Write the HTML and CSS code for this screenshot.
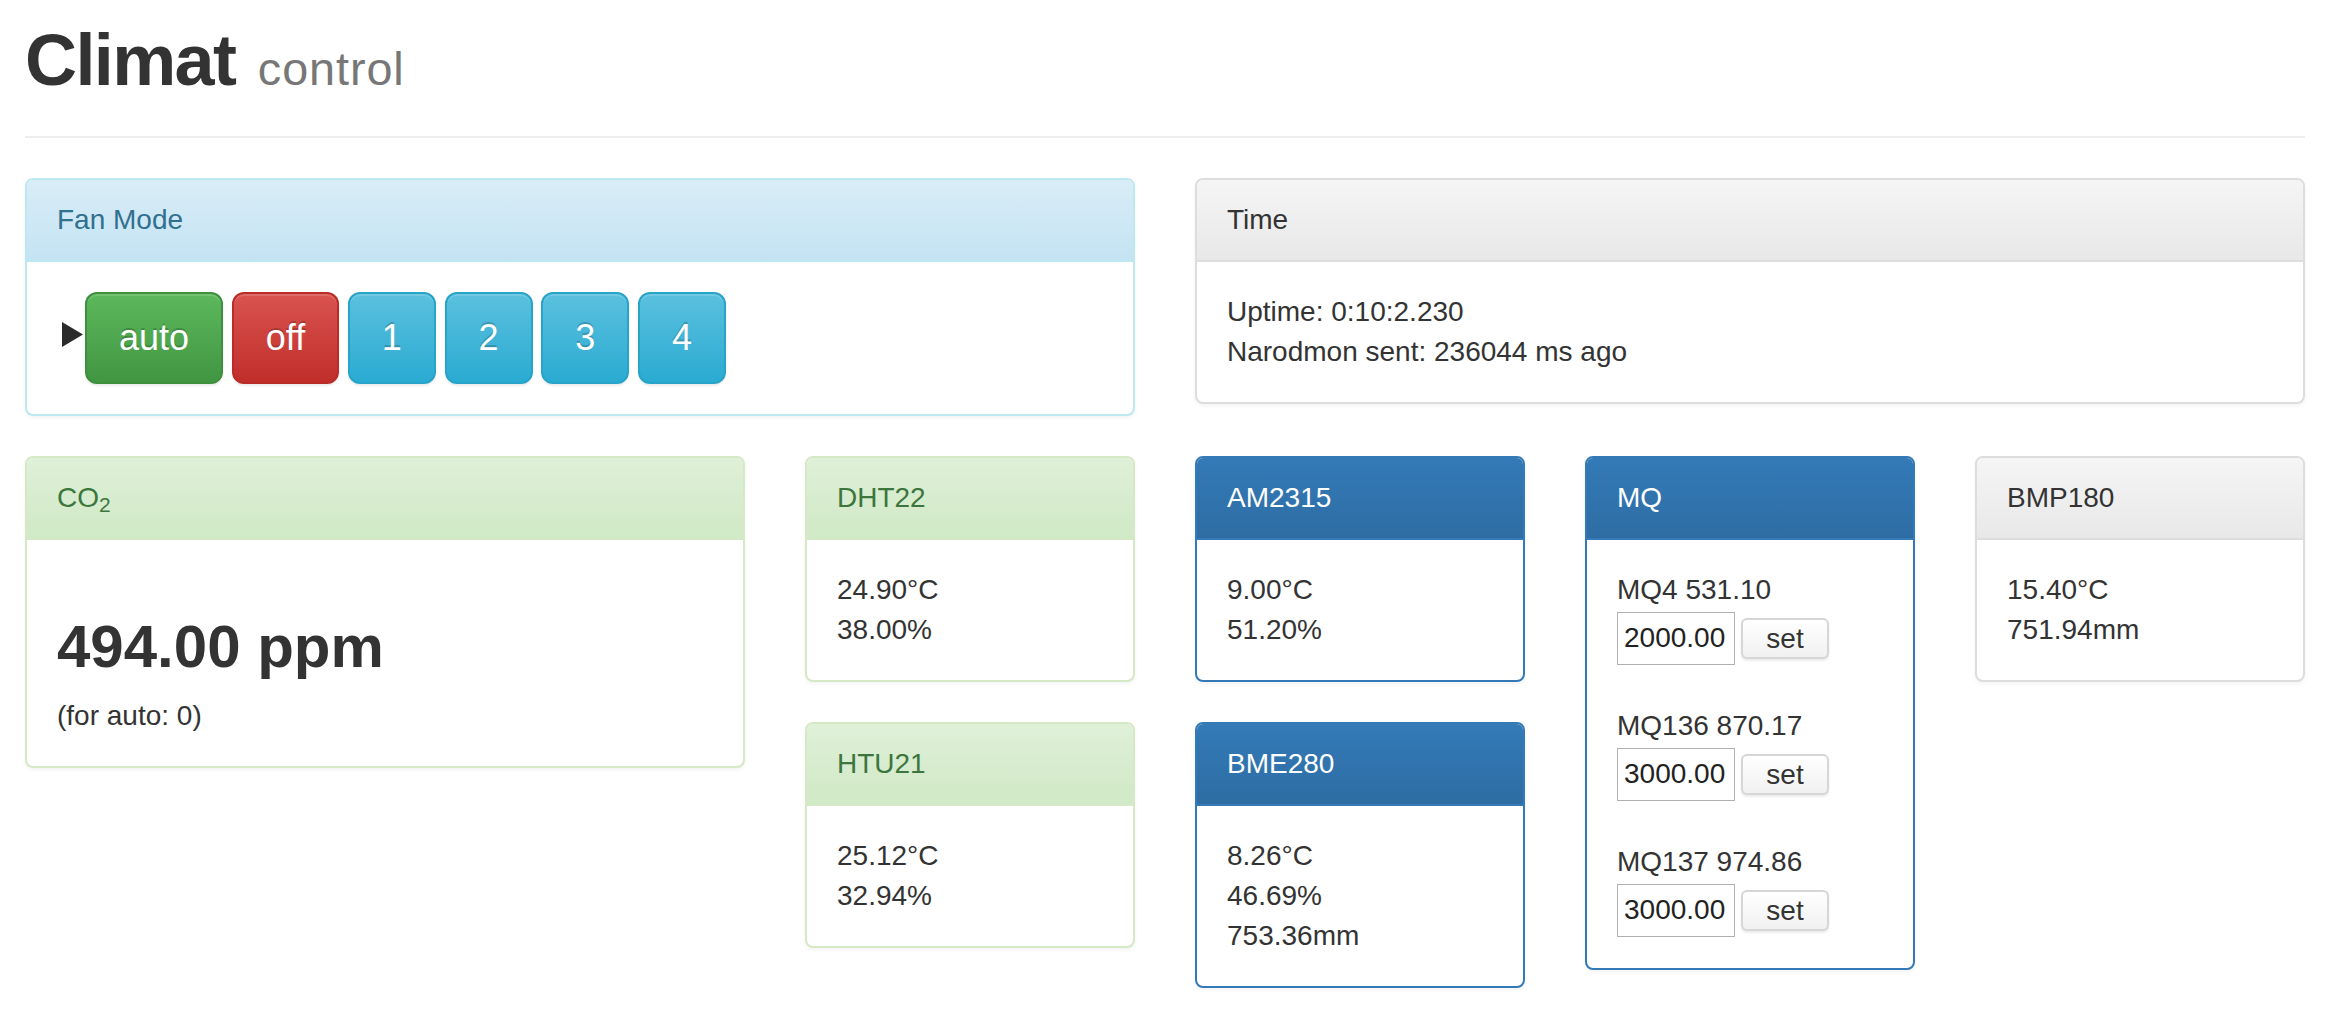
FILE: index.html
```html
<!DOCTYPE html>
<html lang="en">
<head>
<meta charset="utf-8">
<title>Climat control</title>
<link rel="stylesheet" href="styles.css">
</head>
<body>
<div class="page">
  <div class="page-header">
    <h1>Climat <small>control</small></h1>
  </div>

  <div class="row">
    <div class="panel panel-info span3">
      <div class="panel-heading">Fan Mode</div>
      <div class="panel-body fan">
        <svg class="marker" width="21" height="25" viewBox="0 0 21 25"><polygon points="0,0 21,12.5 0,25" fill="#2b2b2b"/></svg>
        <button class="btn btn-success">auto</button>
        <button class="btn btn-danger">off</button>
        <button class="btn btn-info">1</button>
        <button class="btn btn-info">2</button>
        <button class="btn btn-info">3</button>
        <button class="btn btn-info">4</button>
      </div>
    </div>

    <div class="panel panel-default span3">
      <div class="panel-heading">Time</div>
      <div class="panel-body">
        <div>Uptime: 0:10:2.230</div>
        <div>Narodmon sent: 236044 ms ago</div>
      </div>
    </div>
  </div>

  <div class="row">
    <div class="panel panel-success span2">
      <div class="panel-heading">CO<sub>2</sub></div>
      <div class="panel-body">
        <h2 class="ppm">494.00 ppm</h2>
        <p class="note">(for auto: 0)</p>
      </div>
    </div>

    <div class="stack">
      <div class="panel panel-success">
        <div class="panel-heading">DHT22</div>
        <div class="panel-body">
          <div>24.90°C</div>
          <div>38.00%</div>
        </div>
      </div>
      <div class="panel panel-success">
        <div class="panel-heading">HTU21</div>
        <div class="panel-body">
          <div>25.12°C</div>
          <div>32.94%</div>
        </div>
      </div>
    </div>

    <div class="stack">
      <div class="panel panel-primary">
        <div class="panel-heading">AM2315</div>
        <div class="panel-body">
          <div>9.00°C</div>
          <div>51.20%</div>
        </div>
      </div>
      <div class="panel panel-primary">
        <div class="panel-heading">BME280</div>
        <div class="panel-body">
          <div>8.26°C</div>
          <div>46.69%</div>
          <div>753.36mm</div>
        </div>
      </div>
    </div>

    <div class="panel panel-primary">
      <div class="panel-heading">MQ</div>
      <div class="panel-body">
        <div class="mq-group">
          <div>MQ4 531.10</div>
          <div class="mq-row">
            <input class="mq-input" type="text" value="2000.00">
            <button class="btn-set">set</button>
          </div>
        </div>
        <div class="mq-group">
          <div>MQ136 870.17</div>
          <div class="mq-row">
            <input class="mq-input" type="text" value="3000.00">
            <button class="btn-set">set</button>
          </div>
        </div>
        <div class="mq-group">
          <div>MQ137 974.86</div>
          <div class="mq-row">
            <input class="mq-input" type="text" value="3000.00">
            <button class="btn-set">set</button>
          </div>
        </div>
      </div>
    </div>

    <div class="panel panel-default">
      <div class="panel-heading">BMP180</div>
      <div class="panel-body">
        <div>15.40°C</div>
        <div>751.94mm</div>
      </div>
    </div>
  </div>
</div>
</body>
</html>
```

FILE: styles.css
```css
html, body {
  margin: 0;
  padding: 0;
  background: #fff;
}

body {
  font-family: "Liberation Sans", Arial, Helvetica, sans-serif;
  font-size: 28px;
  line-height: 40px;
  color: #333;
}

.page {
  width: 2280px;
  padding-left: 25px;
}

/* ---------- header ---------- */
.page-header {
  padding-bottom: 36px;
  border-bottom: 2px solid #eee;
  margin-bottom: 40px;
}

.page-header h1 {
  margin: 21px 0 0;
  height: 79px;
  font-size: 72px;
  line-height: 79px;
  font-weight: 700;
  letter-spacing: -1.6px;
  color: #333;
}

.page-header h1 small {
  margin-left: 4px;
  font-size: 46.8px;
  line-height: 0;
  font-weight: 400;
  letter-spacing: 0.9px;
  color: #777;
}

/* ---------- grid ---------- */
.row {
  display: grid;
  grid-template-columns: repeat(6, 330px);
  column-gap: 60px;
  align-items: start;
  margin-bottom: 40px;
}

.span3 { grid-column: span 3; }
.span2 { grid-column: span 2; }

.stack {
  display: flex;
  flex-direction: column;
  gap: 40px;
}

/* ---------- panels ---------- */
.panel {
  background: #fff;
  border: 2px solid #ddd;
  border-radius: 8px;
  box-shadow: 0 2px 4px rgba(0, 0, 0, 0.05);
  overflow: hidden;
}

.panel-heading {
  padding: 20px 30px;
  border-bottom: 2px solid #ddd;
  line-height: 40px;
}

.panel-heading sub {
  font-size: 75%;
  line-height: 0;
  vertical-align: -0.25em;
}

.panel-body {
  padding: 30px;
}

.panel-default { border-color: #ddd; }
.panel-default > .panel-heading {
  color: #333;
  background-image: linear-gradient(to bottom, #f5f5f5 0, #e8e8e8 100%);
  border-bottom-color: #ddd;
}

.panel-info { border-color: #bce8f1; }
.panel-info > .panel-heading {
  color: #31708f;
  background-image: linear-gradient(to bottom, #d9edf7 0, #c4e3f3 100%);
  border-bottom-color: #bce8f1;
}

.panel-success { border-color: #d6e9c6; }
.panel-success > .panel-heading {
  color: #3c763d;
  background-image: linear-gradient(to bottom, #dff0d8 0, #d0e9c6 100%);
  border-bottom-color: #d6e9c6;
}

.panel-primary { border-color: #337ab7; }
.panel-primary > .panel-heading {
  color: #fff;
  background-image: linear-gradient(to bottom, #337ab7 0, #2e6da4 100%);
  border-bottom-color: #337ab7;
}

/* ---------- fan buttons ---------- */
.fan {
  display: flex;
  align-items: center;
}

.marker {
  flex: none;
  margin: 0 2px 8px 5px;
}

.btn {
  box-sizing: border-box;
  height: 92px;
  padding: 0 32px;
  border: 2px solid transparent;
  border-radius: 12px;
  font-family: "Liberation Sans", Arial, Helvetica, sans-serif;
  font-size: 36px;
  line-height: 88px;
  color: #fff;
  text-shadow: 0 -2px 0 rgba(0, 0, 0, 0.2);
  box-shadow: inset 0 2px 0 rgba(255, 255, 255, 0.15), 0 2px 2px rgba(0, 0, 0, 0.075);
  margin: 0 0 0 8.7px;
  cursor: pointer;
}

.marker + .btn { margin-left: 0; }

.btn-success {
  background-image: linear-gradient(to bottom, #5cb85c 0, #419641 100%);
  border-color: #3e8f3e;
}

.btn-danger {
  background-image: linear-gradient(to bottom, #d9534f 0, #c12e2a 100%);
  border-color: #b92c28;
}

.btn-info {
  background-image: linear-gradient(to bottom, #5bc0de 0, #2aabd2 100%);
  border-color: #28a4c9;
}

/* ---------- CO2 ---------- */
.ppm {
  margin: 44px 0 16px;
  font-size: 60px;
  line-height: 66px;
  font-weight: 700;
  color: #333;
}

.note {
  margin: 0;
}

/* ---------- MQ ---------- */
.mq-group {
  margin-bottom: 40px;
}

.mq-group:last-child {
  margin-bottom: 0;
}

.mq-row {
  display: flex;
  align-items: center;
  height: 56px;
}

.mq-input {
  box-sizing: border-box;
  width: 118px;
  height: 53px;
  margin: 0 6px 0 0;
  padding: 0 0 0 6px;
  border: 1px solid #b0b0b0;
  border-radius: 0;
  font-family: "Liberation Sans", Arial, Helvetica, sans-serif;
  font-size: 28px;
  color: #222;
  background: #fff;
}

.btn-set {
  box-sizing: border-box;
  width: 88px;
  height: 41px;
  padding: 0;
  border: 2px solid #d6d6d6;
  border-radius: 6px;
  background-image: linear-gradient(to bottom, #fff 0, #f1f1f1 100%);
  box-shadow: 0 2px 2px rgba(0, 0, 0, 0.08);
  font-family: "Liberation Sans", Arial, Helvetica, sans-serif;
  font-size: 28px;
  line-height: 37px;
  color: #333;
  cursor: pointer;
}
```
